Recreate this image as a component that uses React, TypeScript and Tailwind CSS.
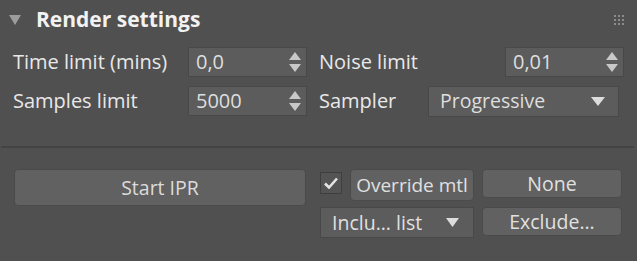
import React from "react";

const font = { fontFamily: '"Open Sans", "Noto Sans", sans-serif' };

function Spinner() {
  return (
    <svg width="12" height="20" viewBox="0 0 12 20" className="shrink-0">
      <polygon points="6,0 12,8 0,8" fill="#c8c8c8" />
      <polygon points="0,12 12,12 6,20" fill="#c8c8c8" />
    </svg>
  );
}

function SpinBox({ value }: { value: string }) {
  return (
    <div className="flex h-[30px] w-[119px] items-center justify-between border border-[#484848] bg-[#5c5c5c] pl-[7px] pr-[5px]">
      <span className="text-[20px] leading-none text-[#dedede]">{value}</span>
      <Spinner />
    </div>
  );
}

function DownTri({ w = 14, h = 9 }: { w?: number; h?: number }) {
  return (
    <svg width={w} height={h} viewBox={`0 0 ${w} ${h}`} className="shrink-0">
      <polygon points={`0,0 ${w},0 ${w / 2},${h}`} fill="#dcdcdc" />
    </svg>
  );
}

export default function App() {
  return (
    <div className="h-[261px] w-[637px] overflow-hidden bg-[#505050] text-[#e8e8e8]" style={font}>
      {/* header */}
      <div className="flex h-[38px] items-center pl-[9px] pr-[13px] pt-[1px]">
        <svg width="12" height="10" viewBox="0 0 12 10" className="shrink-0">
          <polygon points="0,0 12,0 6,10" fill="#9c9c9c" />
        </svg>
        <span className="ml-[15px] text-[21px] font-bold leading-none text-[#f2f2f2]">Render settings</span>
        <div className="ml-auto grid grid-cols-3 gap-[2px]">
          {Array.from({ length: 9 }).map((_, i) => (
            <div key={i} className="h-[2px] w-[2px] bg-[#8c8c8c]" />
          ))}
        </div>
      </div>

      {/* row 1 */}
      <div className="mt-[9px] flex h-[30px] items-center">
        <span className="ml-[13px] w-[175px] whitespace-nowrap text-[20px] leading-none">Time limit (mins)</span>
        <SpinBox value="0,0" />
        <span className="ml-[12px] w-[186px] text-[20px] leading-none">Noise limit</span>
        <SpinBox value="0,01" />
      </div>

      {/* row 2 */}
      <div className="mt-[9px] flex h-[30px] items-center">
        <span className="ml-[13px] w-[175px] text-[20px] leading-none">Samples limit</span>
        <SpinBox value="5000" />
        <span className="ml-[12px] w-[109px] text-[20px] leading-none">Sampler</span>
        <div className="flex h-[31px] w-[191px] items-center justify-between border border-[#484848] bg-[#5c5c5c] pl-[11px] pr-[13px]">
          <span className="text-[19.5px] leading-none text-[#dedede]">Progressive</span>
          <DownTri />
        </div>
      </div>

      {/* separator */}
      <div className="ml-[1px] mt-[30px] h-[2px] w-[633px] bg-[#444444]" />

      {/* bottom */}
      <div className="mt-[21px] flex">
        <div className="ml-[14px] flex h-[37px] w-[292px] items-center justify-center rounded-[4px] border border-[#4a4a4a] bg-[#616161] text-[19.5px] leading-none text-[#dcdcdc]">
          Start IPR
        </div>
        <div className="ml-[14px] flex flex-col gap-[6px]">
          <div className="flex items-start">
            <div className="mt-[3px] flex h-[22px] w-[22px] items-center justify-center border border-[#3e3e3e] bg-[#545454]">
              <svg width="14" height="12" viewBox="0 0 14 12">
                <path d="M1 6.5 L5 10.5 L13 1.5" stroke="#e4e4e4" strokeWidth="2.6" fill="none" />
              </svg>
            </div>
            <div className="ml-[8px] flex h-[32px] w-[124px] items-center justify-center whitespace-nowrap rounded-[4px] border border-[#4a4a4a] bg-[#616161] text-[19px] leading-none text-[#e0e0e0]">
              Override mtl
            </div>
          </div>
          <div className="flex h-[31px] w-[154px] items-center justify-between border border-[#484848] bg-[#5c5c5c] pl-[11px] pr-[14px]">
            <span className="text-[19.5px] leading-none text-[#e0e0e0]">Inclu... list</span>
            <DownTri w={13} h={9} />
          </div>
        </div>
        <div className="ml-[8px] flex flex-col gap-[9px]">
          <div className="flex h-[29px] w-[140px] items-center justify-center rounded-[4px] border border-[#4a4a4a] bg-[#616161] text-[19.5px] leading-none text-[#e0e0e0]">
            None
          </div>
          <div className="flex h-[29px] w-[140px] items-center justify-center rounded-[4px] border border-[#4a4a4a] bg-[#616161] text-[19.5px] leading-none text-[#e0e0e0]">
            Exclude...
          </div>
        </div>
      </div>
    </div>
  );
}
